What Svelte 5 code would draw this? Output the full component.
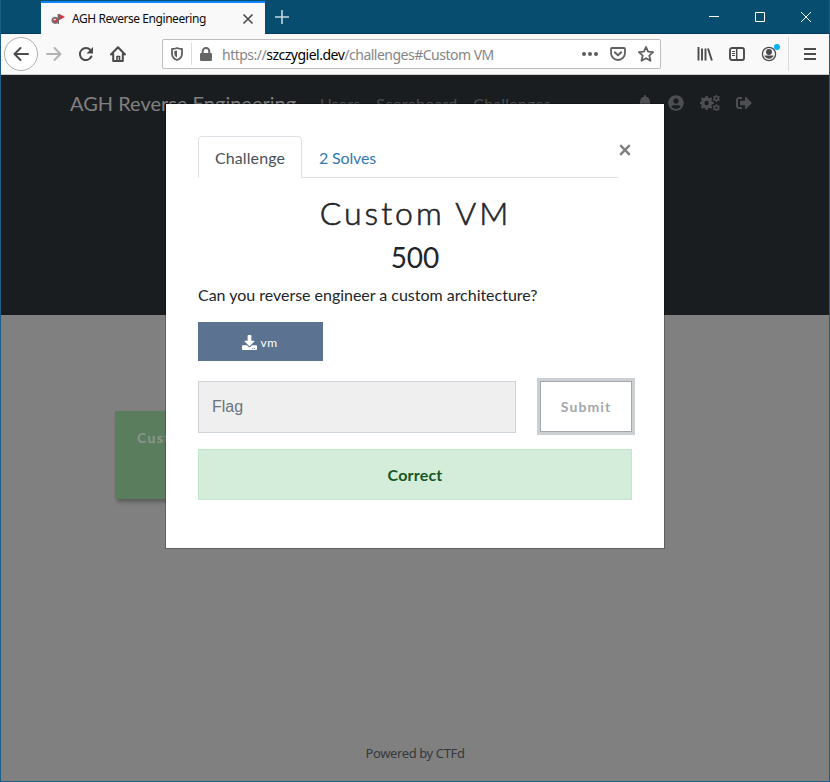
<script>
  const gear = (cx, cy, outer, inner, hole, teeth) => {
    let d = '';
    const step = (Math.PI * 2) / teeth;
    const at = (r, a) => `${(cx + r * Math.cos(a)).toFixed(2)} ${(cy + r * Math.sin(a)).toFixed(2)}`;
    for (let i = 0; i < teeth; i++) {
      const a = i * step - Math.PI / 2;
      d += `${i ? 'L' : 'M'}${at(inner, a - step * 0.3)}L${at(outer, a - step * 0.2)}L${at(outer, a + step * 0.2)}L${at(inner, a + step * 0.3)}`;
    }
    return `${d}ZM${cx - hole} ${cy}a${hole} ${hole} 0 1 0 ${hole * 2} 0a${hole} ${hole} 0 1 0 ${-hole * 2} 0Z`;
  };
  const gears = gear(6.6, 8, 7.2, 5.5, 2.2, 8) + gear(16.4, 3.4, 3.7, 2.7, 1.2, 6) + gear(16.4, 12.8, 3.7, 2.7, 1.2, 6);
  const links = ['Users', 'Scoreboard', 'Challenges'];
</script>

<div class="window">
  <div class="titlebar">
    <div class="tab">
      <svg class="favicon" width="14" height="12" viewBox="0 0 14 12">
        <circle cx="4" cy="7.300" r="3" fill="#b9404c" stroke="#77777a" stroke-width="1.200" />
        <path d="M2.500 6.500h2.500" stroke="#ddd" stroke-width="1.500" />
        <path d="M7.300 1v10" stroke="#666" stroke-width="1.300" />
        <path d="M8 .8l6 3.200-6 3.200z" fill="#cf3a48" />
      </svg>
      <span class="tabtitle">AGH Reverse Engineering</span>
      <svg width="12" height="12" viewBox="0 0 12 12"><path d="M1.500 1.500l9 9M10.500 1.500l-9 9" stroke="#4a4a4c" stroke-width="1.600" /></svg>
    </div>
    <svg class="plus" width="14" height="14" viewBox="0 0 14 14"><path d="M7 0v14M0 7h14" stroke="#c6d8e2" stroke-width="1.600" /></svg>
    <div class="controls">
      <svg width="10" height="10"><path d="M0 4.500h10" stroke="#fff" /></svg>
      <svg width="10" height="10"><path d="M.5.5h9v9h-9z" stroke="#fff" fill="none" /></svg>
      <svg width="10" height="10"><path d="M0 0l10 10M10 0L0 10" stroke="#fff" /></svg>
    </div>
  </div>

  <div class="toolbar">
    <div class="back">
      <svg width="16" height="16" viewBox="0 0 16 16" fill="none" stroke="#4b4b4d" stroke-width="2" stroke-linecap="round" stroke-linejoin="round"><path d="M15 8H1.500M7.500 2l-6 6 6 6" /></svg>
    </div>
    <svg class="fwd" width="16" height="16" viewBox="0 0 16 16" fill="none" stroke="#b4b4b5" stroke-width="2" stroke-linecap="round" stroke-linejoin="round"><path d="M1 8h13.500M8.500 2l6 6-6 6" /></svg>
    <svg class="reload" width="16" height="16" viewBox="0 0 16 16"><path d="M12.800 4.600A6 6 0 1 0 13.400 10.500" fill="none" stroke="#4b4b4d" stroke-width="2" stroke-linecap="round" /><path d="M15 1v6.500H8.500z" fill="#4b4b4d" /></svg>
    <svg class="home" width="16" height="16" viewBox="0 0 16 16" fill="none" stroke="#4b4b4d" stroke-width="2" stroke-linecap="round" stroke-linejoin="round"><path d="M1 8.500L8 1.200l7 7.300M3.200 8v7h9.600V8" /><path d="M7 14.500v-4h2.500v4" stroke-width="1.600" /></svg>

    <div class="urlbar">
      <svg class="shield" width="12" height="14" viewBox="0 0 12 14"><path d="M6 1C4.500 1.700 3 2 1 2v4.500C1 9.500 3 12 6 13c3-1 5-3.500 5-6.500V2C9 2 7.500 1.700 6 1z" fill="none" stroke="#606062" stroke-width="1.800" stroke-linejoin="round" /><path d="M6 3.500v7C4 9.500 3.300 8 3.300 6.500V4z" fill="#606062" /></svg>
      <i></i>
      <svg class="lock" width="12" height="14" viewBox="0 0 12 14"><rect y="6" width="12" height="8" rx="1.200" fill="#656567" /><path d="M2.700 6.500V4.200a3.300 3.300 0 0 1 6.600 0v2.300" fill="none" stroke="#656567" stroke-width="2" /></svg>
      <span class="url">https://<b>szczygiel.dev</b>/challenges#Custom VM</span>
      <svg class="dots" width="16" height="4" viewBox="0 0 16 4" fill="#5c5c5e"><circle cx="2" cy="2" r="2" /><circle cx="8" cy="2" r="2" /><circle cx="14" cy="2" r="2" /></svg>
      <svg class="pocket" width="16" height="14" viewBox="0 0 16 14" fill="none" stroke="#606062" stroke-linecap="round" stroke-linejoin="round"><path d="M2 1h12a1 1 0 0 1 1 1v4a7 7 0 0 1-14 0V2a1 1 0 0 1 1-1z" stroke-width="1.800" /><path d="M4.800 5.300L8 8.200l3.200-2.900" stroke-width="2" /></svg>
      <svg class="star" width="16" height="16" viewBox="0 0 16 16"><path d="M8 1l2.100 4.700 5 .5-3.800 3.400 1.200 5.200L8 12.200l-4.500 2.600 1.200-5.200L.9 6.200l5-.5z" fill="none" stroke="#606062" stroke-width="1.800" stroke-linejoin="round" /></svg>
    </div>

    <svg class="library" width="16" height="14" viewBox="0 0 16 14" fill="none" stroke="#4b4b4d" stroke-width="1.900"><path d="M1.500 0v13.500M5 1.500v12M8.500 1.500v12M11 1.500l3.900 12" /></svg>
    <svg class="sidebar" width="16" height="14" viewBox="0 0 16 14" fill="none" stroke="#4b4b4d"><rect x="1" y="1" width="14" height="12" rx="2" stroke-width="1.900" /><path d="M7.700 1v12" stroke-width="1.500" /><path d="M3 4.500h3M3 6.500h3M3 8.500h3" stroke-width="1" /></svg>
    <svg class="account" width="20" height="20" viewBox="0 0 20 20"><circle cx="8" cy="12" r="6.600" fill="none" stroke="#4b4b4d" stroke-width="1.300" /><circle cx="8" cy="10" r="3" fill="#4b4b4d" /><path d="M3.800 14h8.400A5 5 0 0 1 3.800 14z" fill="#4b4b4d" stroke="#4b4b4d" /><circle cx="16" cy="5" r="3" fill="#00b3f4" /></svg>
    <span class="divider"></span>
    <svg class="menu" width="12" height="12" viewBox="0 0 12 12"><path d="M0 1h12M0 6h12M0 11h12" stroke="#4b4b4d" stroke-width="2" /></svg>
  </div>

  <div class="page">
    <header>
      <nav>
        <span class="brand">AGH Reverse Engineering</span>
        <div class="links">{#each links as link}<span>{link}</span>{/each}</div>
        <div class="icons">
          <svg width="14" height="16" viewBox="0 0 448 512"><path d="M224 512c35.320 0 63.970-28.650 63.970-64H160.030c0 35.350 28.650 64 63.970 64zm215.390-149.710c-19.320-20.760-55.470-51.990-55.470-154.290 0-77.700-54.480-139.900-127.940-155.160V32c0-17.670-14.320-32-31.980-32s-31.980 14.330-31.980 32v20.840C118.560 68.100 64.080 130.300 64.080 208c0 102.300-36.150 133.530-55.470 154.290-6 6.450-8.660 14.160-8.610 21.710.11 16.400 12.980 32 32.100 32h383.800c19.120 0 32-15.600 32.100-32 .05-7.550-2.610-15.270-8.610-21.710z" /></svg>
          <svg width="16" height="16" viewBox="0 0 496 512"><path d="M248 8C111 8 0 119 0 256s111 248 248 248 248-111 248-248S385 8 248 8zm0 96c48.600 0 88 39.400 88 88s-39.400 88-88 88-88-39.400-88-88 39.400-88 88-88zm0 344c-58.700 0-111.300-26.600-146.500-68.200 18.800-35.400 55.600-59.800 98.500-59.800 2.400 0 4.800.4 7.100 1.100 13 4.200 26.600 6.900 40.900 6.900 14.300 0 28-2.700 40.900-6.900 2.300-.7 4.700-1.100 7.100-1.100 42.900 0 79.700 24.400 98.500 59.800C359.300 421.400 306.700 448 248 448z" /></svg>
          <svg width="20" height="16" viewBox="0 0 20 16"><path d={gears} fill-rule="evenodd" /></svg>
          <svg width="16" height="16" viewBox="0 0 512 512"><path d="M497 273L329 441c-15 15-41 4.500-41-17v-96H152c-13.300 0-24-10.700-24-24v-96c0-13.300 10.700-24 24-24h136V88c0-21.400 25.900-32 41-17l168 168c9.300 9.400 9.300 24.600 0 34zM192 436v-40c0-6.600-5.400-12-12-12H96c-17.700 0-32-14.300-32-32V160c0-17.700 14.300-32 32-32h84c6.600 0 12-5.400 12-12V76c0-6.600-5.400-12-12-12H96c-53 0-96 43-96 96v192c0 53 43 96 96 96h84c6.600 0 12-5.400 12-12z" /></svg>
        </div>
      </nav>
    </header>
    <main>
      <div class="card">Custom VM</div>
    </main>
    <footer>Powered by CTFd</footer>

    <section class="modal">
      <div class="top">
        <div class="tabs">
          <span class="active">Challenge</span>
          <span class="solves">2 Solves</span>
        </div>
        <svg class="close" width="12" height="12" viewBox="0 0 12 12"><path d="M1.200 1.200l9.600 9.600M10.800 1.200l-9.600 9.600" stroke="#7f7f7f" stroke-width="2.400" /></svg>
      </div>
      <h2>Custom VM</h2>
      <h3>500</h3>
      <p>Can you reverse engineer a custom architecture?</p>
      <div class="file">
        <svg width="15" height="15" viewBox="0 0 512 512"><path fill="#fff" d="M216 0h80c13.300 0 24 10.700 24 24v168h87.700c17.800 0 26.700 21.500 14.100 34.100L269.700 378.300c-7.500 7.500-19.800 7.500-27.300 0L90.100 226.100c-12.600-12.600-3.700-34.100 14.100-34.100H192V24c0-13.300 10.700-24 24-24zm296 376v112c0 13.300-10.700 24-24 24H24c-13.300 0-24-10.700-24-24V376c0-13.300 10.700-24 24-24h146.700l49 49c20.100 20.100 52.500 20.100 72.600 0l49-49H488c13.300 0 24 10.700 24 24zm-124 88c0-11-9-20-20-20s-20 9-20 20 9 20 20 20 20-9 20-20zm64 0c0-11-9-20-20-20s-20 9-20 20 9 20 20 20 20-9 20-20z" /></svg>
        <span>vm</span>
      </div>
      <div class="form">
        <div class="input">Flag</div>
        <div class="submit">Submit</div>
      </div>
      <div class="alert">Correct</div>
    </section>
  </div>
</div>

<style>
  :global(body) { margin: 0; }
  * { box-sizing: border-box; }
  svg { display: block; flex: none; }
  .window { width: 830px; height: 782px; display: flex; flex-direction: column; overflow: hidden; border: 1px solid #1c5f86; border-top: 0; background: #808080; font-family: Lato, sans-serif; }
  .titlebar { height: 34px; flex: none; background: #074d6f; border-bottom: 1px solid #053a5c; display: flex; align-items: center; padding-left: 40px; }
  .tab { width: 224px; height: 33px; margin: 1px 0 -1px; background: #f9f9fa; border-top: 2px solid #0a84ff; display: flex; align-items: center; padding: 0 11px 0 10px; }
  .favicon { margin-right: 7px; }
  .tabtitle { font: 12px 'Noto Sans', sans-serif; letter-spacing: -.44px; color: #0c0c0d; flex: 1; white-space: nowrap; }
  .plus { margin-left: 10px; }
  .controls { margin-left: auto; display: flex; gap: 36px; margin-right: 18px; }
  .toolbar { height: 41px; flex: none; background: #f9f9fa; border-bottom: 1px solid #ccc; display: flex; align-items: center; padding-left: 3px; }
  .back { width: 34px; height: 34px; border: 1px solid #b1b1b2; border-radius: 50%; background: #fff; display: grid; place-items: center; flex: none; }
  .fwd { margin-left: 8px; }
  .reload { margin-left: 16px; }
  .home { margin-left: 16px; }
  .urlbar { width: 499px; height: 30px; flex: none; margin-left: 36px; border: 1px solid #bdbdbe; border-radius: 2px; background: #fff; display: flex; align-items: center; padding-left: 8px; }
  .urlbar i { width: 1px; height: 22px; background: #dcdcdc; margin: 0 8px; }
  .url { font: 14px 'Noto Sans', sans-serif; color: #858588; margin-left: 10px; white-space: nowrap; letter-spacing: -.5px; width: 360px; }
  .url b { font-weight: 400; color: #000; }
  .pocket { margin-left: 12px; }
  .star { margin-left: 12px; }
  .library { margin-left: 36px; }
  .sidebar { margin-left: 16px; }
  .account { margin: -4px 0 0 16px; }
  .divider { width: 1px; height: 34px; background: #dadadb; margin: 0 15px 0 7px; }
  .page { flex: 1; position: relative; display: flex; flex-direction: column; }
  header { height: 240px; background: #1a1d20; flex: none; }
  nav { height: 56px; display: flex; align-items: center; padding: 0 77px 0 69px; }
  .brand { font-size: 20px; color: #808080; white-space: nowrap; width: 250px; line-height: 24px; padding-bottom: 1px; }
  .links { display: flex; gap: 16px; font-size: 16px; letter-spacing: .15px; color: #4d4e50; }
  .icons { display: flex; gap: 16px; margin-left: auto; fill: #4d4e50; }
  main { flex: 1; padding: 96px 0 0 114px; }
  .card { width: 220px; height: 88px; background: #5a7d5e; box-shadow: 2px 3px 4px rgba(0,0,0,.3); padding: 18px 22px; font-weight: 700; font-size: 14px; letter-spacing: 1.3px; color: #8b958c; }
  footer { text-align: center; font: 13px 'Noto Sans', sans-serif; letter-spacing: -.38px; color: #36393c; height: 37px; }
  .modal { position: absolute; left: 164px; top: 28px; width: 500px; height: 446px; background: #fff; background-clip: padding-box; border: 1px solid rgba(0,0,0,.25); padding: 32px; color: #212529; }
  .top { display: flex; height: 42px; }
  .tabs { width: 420px; height: 42px; border-bottom: 1px solid #dee2e6; display: flex; font-size: 16px; line-height: 24px; }
  .active { height: 42px; width: 104px; border: 1px solid #dee2e6; border-bottom-color: #fff; border-radius: 4px 4px 0 0; background: #fff; color: #495057; padding: 9px 16px; letter-spacing: .1px; }
  .solves { padding: 10px 17px; color: #337ab7; letter-spacing: -.15px; }
  .close { margin: 8px 0 0 1px; }
  h2 { font-family: Lato, sans-serif; font-weight: 300; font-size: 32px; line-height: 38px; letter-spacing: 3px; text-align: center; margin: 16px 0 0; padding-left: 1px; -webkit-text-stroke: .6px #212529; }
  h3 { font-weight: 400; font-size: 28px; line-height: 34px; text-align: center; margin: 8px 0 0; }
  p { font-size: 16px; line-height: 24px; margin: 9px 0 0; white-space: nowrap; letter-spacing: -.02px; }
  .file { width: 125px; height: 39px; background: #5b7290; color: #fff; display: flex; align-items: center; justify-content: center; gap: 4px; margin-top: 15px; padding: 1px 2px 0 0; font-size: 12px; letter-spacing: .4px; }
  .form { display: flex; justify-content: space-between; margin-top: 20px; height: 52px; }
  .input { width: 318px; background: #efefef; border: 1px solid #ced4da; font: 16px/50px 'Liberation Sans', sans-serif; color: #6c757d; padding-left: 13px; }
  .submit { width: 92px; height: 51px; border: 1px solid #a3a8ae; box-shadow: 0 0 0 3px #cdd0d3; font-weight: 700; font-size: 14px; line-height: 50px; letter-spacing: 1.1px; text-align: center; color: #a3a8ae; }
  .alert { height: 51px; margin-top: 16px; border: 1px solid #c3e6cb; background: #d4edda; color: #155724; text-align: center; font-weight: 700; font-size: 16px; line-height: 49px; letter-spacing: .2px; }
</style>
